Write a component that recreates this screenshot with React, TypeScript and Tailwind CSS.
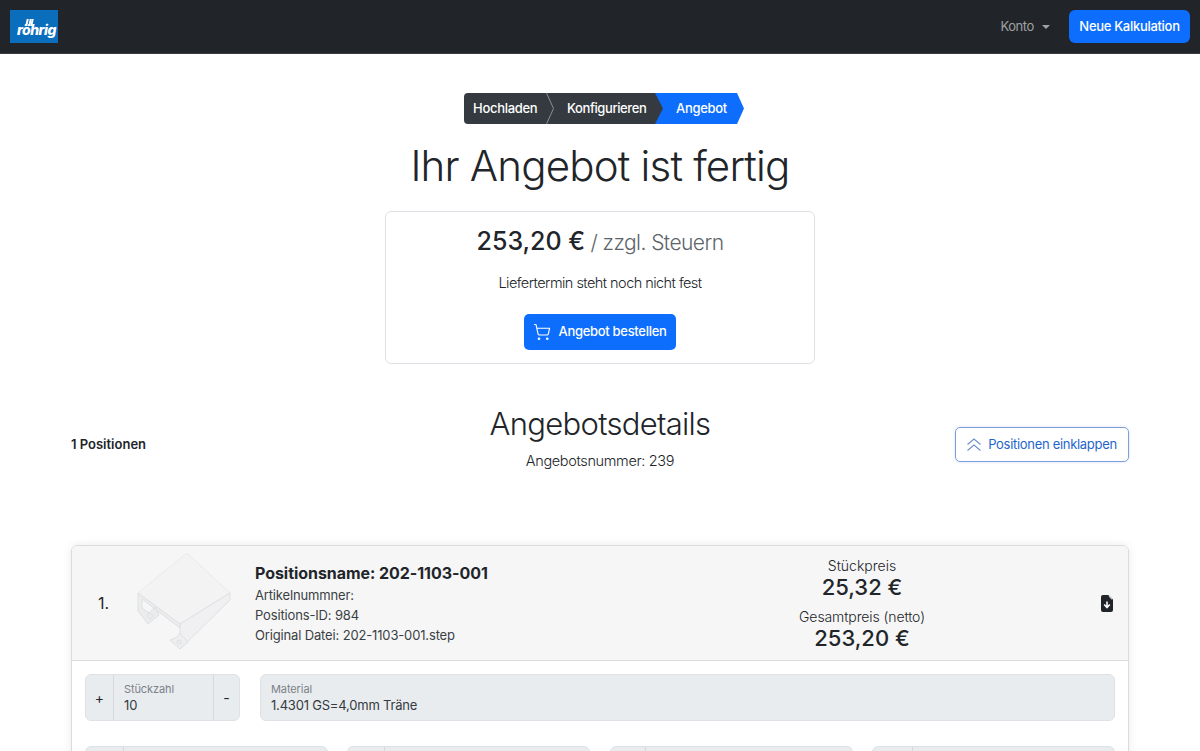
import React from 'react';
import { ShoppingCart } from 'lucide-react';

const font = { fontFamily: 'Inter, sans-serif' };

// blurry logo: blue square with the wordmark
const Logo = () => (
  <div className="relative h-[33px] w-[48px] bg-[#0a6ebd] text-white">
    <div className="absolute left-[16px] top-[9px] flex gap-[1px]">
      <span className="h-[7px] w-[1.5px] -skew-x-12 bg-white" />
      <span className="h-[7px] w-[1.5px] -skew-x-12 bg-white" />
      <span className="h-[7px] w-[1.5px] -skew-x-12 bg-white" />
    </div>
    <span className="absolute left-[7px] top-[13px] text-[14px] font-extrabold italic leading-[14px] tracking-[-0.5px]">röhrig</span>
  </div>
);

const Steps = () => (
  <div className="ml-[8px] flex h-[31px] w-[280px] text-[13px] font-medium leading-[31px] text-white">
    <div className="w-[82px] shrink-0 rounded-l-[4px] bg-[#343a40] pl-[9px] tracking-[-0.3px]">Hochladen</div>
    <div className="relative w-[109px] shrink-0 bg-[#343a40] pl-[21px] tracking-[-0.4px]">
      Konfigurieren
      <svg className="absolute left-0 top-0" width="10" height="31" viewBox="0 0 10 31" fill="none">
        <path d="M0.5 0 L7.5 15.5 L0.5 31" stroke="#8b9094" strokeWidth="1" />
      </svg>
    </div>
    <div className="relative w-[89px] shrink-0 bg-[#0d6efd] pl-[21px] tracking-[-0.3px] [clip-path:polygon(0_0,calc(100%-7px)_0,100%_50%,calc(100%-7px)_100%,0_100%)]">
      Angebot
      <svg className="absolute left-0 top-0" width="8" height="31" viewBox="0 0 8 31">
        <path d="M0 0 L8 15.5 L0 31 Z" fill="#343a40" />
      </svg>
    </div>
  </div>
);

const Part = () => (
  <svg width="100" height="100" viewBox="0 0 100 100" fill="none" stroke="#dfe0e2" strokeWidth="1" strokeLinejoin="round">
    <path d="M3 40 L52 0 L95 40 L45 71 Z" fill="#f3f3f4" stroke="#e8e9ea" />
    <path d="M95 40 L95 47 L45 96 L45 71 Z" fill="#f0f0f2" />
    <path d="M3 40 L45 71 L45 75 L7 46 L7 55 L14 60 L20 54 L24 62 L13 71 L3 58 Z" fill="#ebecee" />
    <circle cx="15" cy="63" r="2.5" />
    <path d="M35 87 L45 96 L53 89 L45 80 L42 84 Z" fill="#edeef0" />
    <circle cx="44" cy="89" r="2" />
  </svg>
);

const FileDown = () => (
  <svg width="12" height="17" viewBox="0 0 12 17">
    <path d="M2 0 H7.5 L12 4.5 V15 a2 2 0 0 1 -2 2 H2 a2 2 0 0 1 -2 -2 V2 a2 2 0 0 1 2 -2 Z" fill="#212529" />
    <path d="M7.7 1 L11 4.3" stroke="#fff" strokeWidth="1" />
    <path d="M6 6.5 V12 M3.2 9.5 L6 12.5 L8.8 9.5" stroke="#fff" strokeWidth="1.6" fill="none" />
  </svg>
);

const ChevronsUp = () => (
  <svg width="14" height="14" viewBox="0 0 14 14" fill="none" stroke="#6e8fc9" strokeWidth="1.1">
    <path d="M0.5 6.5 L7 1 L13.5 6.5" />
    <path d="M0.5 12.5 L7 7 L13.5 12.5" />
  </svg>
);

const stubs = ['w-[38px]', 'w-[37px]', 'w-[35px]', 'w-[40px]'];

export default function App() {
  return (
    <div style={font} className="h-[751px] overflow-hidden bg-white text-[#212529]">
      <nav className="flex h-[54px] items-center justify-between border-b border-[#3a3d40] bg-[#212529] px-[10px]">
        <Logo />
        <div className="flex items-center">
          <span className="text-[13px] tracking-[-0.4px] text-[#a0a2a4]">Konto</span>
          <span className="ml-[8px] mr-[19px] h-0 w-0 border-x-[4px] border-t-[4px] border-x-transparent border-t-[#a0a2a4]" />
          <button className="h-[33px] w-[121px] rounded-[6px] bg-[#0d6efd] text-[13px] font-medium tracking-[-0.3px] text-white">Neue Kalkulation</button>
        </div>
      </nav>

      <main className="flex flex-col items-center pt-[39px]">
        <Steps />
        <h1 className="mt-[11px] text-[42px] font-light leading-[62px] tracking-[-0.8px]">Ihr Angebot ist fertig</h1>

        <section className="mt-[14px] flex h-[153px] w-[430px] flex-col items-center rounded-[6px] border border-[#dee2e6] pt-[13px]">
          <div className="leading-[32px]">
            <span className="text-[25px] font-medium">253,20 €</span>
            <span className="text-[21px] font-light tracking-[-0.55px] text-[#5c636a]"> / zzgl. Steuern</span>
          </div>
          <p className="mt-[11px] text-[14.5px] font-light leading-[24px] tracking-[-0.55px]">Liefertermin steht noch nicht fest</p>
          <button className="mt-[19px] flex h-[36px] w-[152px] items-center justify-center gap-[7px] rounded-[5px] bg-[#0d6efd] text-[13px] font-medium tracking-[-0.3px] text-white">
            <ShoppingCart size={18} strokeWidth={1.5} />
            Angebot bestellen
          </button>
        </section>

        <section className="mt-[41px] grid h-[102px] w-[1058px] grid-cols-[1fr_auto_1fr] items-start">
          <div className="pt-[29px] text-[13px] font-semibold leading-[20px]">1 Positionen</div>
          <div className="text-center">
            <h2 className="text-[31px] font-light leading-[38px] tracking-[-0.7px]">Angebotsdetails</h2>
            <p className="mt-[6px] text-[14.5px] font-light leading-[24px] tracking-[-0.35px]">Angebotsnummer: 239</p>
          </div>
          <button className="mt-[22px] flex h-[35px] w-[174px] items-center justify-center gap-[7px] justify-self-end rounded-[5px] border border-[#7d9fd8] text-[13px] tracking-[-0.3px] text-[#1f66cc] shadow-[0_0_3px_rgba(60,100,200,0.2)]">
            <ChevronsUp />
            Positionen einklappen
          </button>
        </section>

        <section className="mt-[38px] w-[1058px] rounded-[6px] border border-[#dcdcdc] shadow-[0_0_10px_rgba(0,0,0,0.08)]">
          <header className="flex h-[115px] items-center rounded-t-[6px] border-b border-[#dcdcdc] bg-[#f6f6f6]">
            <span className="ml-[26px] w-[37px] text-[16px]">1.</span>
            <Part />
            <div className="ml-[20px] w-[500px]">
              <div className="text-[16px] font-bold leading-[24px] tracking-[-0.05px]">Positionsname: 202-1103-001</div>
              <div className="text-[13px] leading-[20px] tracking-[-0.15px] text-[#3a3f44]">
                <p>Artikelnummner:</p>
                <p>Positions-ID: 984</p>
                <p>Original Datei: 202-1103-001.step</p>
              </div>
            </div>
            <div className="ml-[7px] w-[200px] text-center">
              <div className="text-[14px] font-light leading-[18px]">Stückpreis</div>
              <div className="text-[22px] font-medium leading-[24px]">25,32 €</div>
              <div className="mt-[9px] text-[14px] font-light leading-[18px] tracking-[-0.1px]">Gesamtpreis (netto)</div>
              <div className="text-[22px] font-medium leading-[24px]">253,20 €</div>
            </div>
            <div className="ml-[139px]"><FileDown /></div>
          </header>
          <div className="px-[13px] pt-[13px]">
            <div className="flex gap-[20px]">
              <div className="flex h-[47px] w-[155px] overflow-hidden rounded-[6px] border border-[#dee2e6] bg-[#e9ecef]">
                <div className="flex w-[28px] items-center justify-center border-r border-[#d5d9dd] text-[14px]">+</div>
                <div className="flex-1 pl-[10px] pt-[7px]">
                  <div className="text-[11px] leading-[15px] tracking-[-0.1px] text-[#7b8187]">Stückzahl</div>
                  <div className="text-[13px] leading-[17px] text-[#343a40]">10</div>
                </div>
                <div className="flex w-[26px] items-center justify-center border-l border-[#d5d9dd] text-[14px]">-</div>
              </div>
              <div className="h-[47px] flex-1 rounded-[6px] border border-[#dee2e6] bg-[#e9ecef] pl-[10px] pt-[7px]">
                <div className="text-[11px] leading-[15px] tracking-[-0.1px] text-[#7b8187]">Material</div>
                <div className="text-[13px] leading-[17px] tracking-[-0.2px] text-[#343a40]">1.4301 GS=4,0mm Träne</div>
              </div>
            </div>
            <div className="mt-[25px] flex justify-between">
              {stubs.map((w) => (
                <div key={w} className="flex h-[20px] w-[243px] overflow-hidden rounded-[6px] border border-[#dee2e6] bg-[#e9ecef]">
                  <div className={`${w} border-r border-[#d5d9dd]`} />
                </div>
              ))}
            </div>
          </div>
        </section>
      </main>
    </div>
  );
}
